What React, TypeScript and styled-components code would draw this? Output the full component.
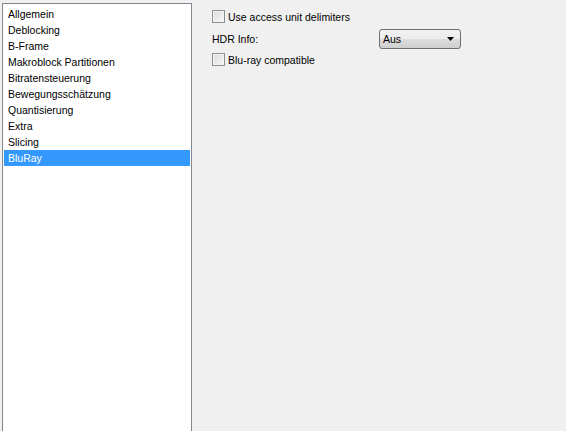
import React from "react";
import styled, { createGlobalStyle } from "styled-components";

const Global = createGlobalStyle`
  html, body { margin: 0; padding: 0; background: #f0f0f0; }
  body { font-family: Tahoma, "Liberation Sans", "DejaVu Sans", sans-serif; font-size: 10.5px; color: #000; }
`;

const Page = styled.div`
  width: 566px;
  height: 431px;
  overflow: hidden;
  display: flex;
  align-items: flex-start;
  padding: 3px 0 0 2px;
  box-sizing: border-box;
  gap: 20px;
`;

const ListBox = styled.div`
  width: 190px;
  height: 440px;
  box-sizing: border-box;
  background: #fff;
  border: 1px solid #828790;
  padding: 2px 1px;
  display: flex;
  flex-direction: column;
`;

const Item = styled.div<{ $selected?: boolean }>`
  height: 16px;
  line-height: 16px;
  padding-left: 4px;
  white-space: nowrap;
  background: ${(p) => (p.$selected ? "#3399ff" : "transparent")};
  color: ${(p) => (p.$selected ? "#fff" : "#000")};
`;

const Panel = styled.div`
  display: flex;
  flex-direction: column;
  padding-top: 7px;
  width: 249px;
`;

const CheckRow = styled.label`
  display: flex;
  align-items: center;
  height: 13px;
  gap: 3px;
`;

const Box = styled.span`
  width: 13px;
  height: 13px;
  box-sizing: border-box;
  border: 1px solid #8e8f8f;
  background: linear-gradient(135deg, #dcdcdc 0%, #f6f6f6 100%);
  box-shadow: inset 0 0 0 1px #f4f4f4;
`;

const FieldRow = styled.div`
  display: flex;
  align-items: center;
  justify-content: space-between;
  height: 20px;
  margin: 6px 0 4px;
`;

const Select = styled.div`
  width: 82px;
  height: 20px;
  box-sizing: border-box;
  border: 1px solid #707070;
  border-radius: 3px;
  background: linear-gradient(#f2f2f2 0%, #ebebeb 50%, #dddddd 51%, #cfcfcf 100%);
  display: flex;
  align-items: center;
  justify-content: space-between;
  padding: 0 6px 0 3px;
`;

const items = [
  "Allgemein",
  "Deblocking",
  "B-Frame",
  "Makroblock Partitionen",
  "Bitratensteuerung",
  "Bewegungsschätzung",
  "Quantisierung",
  "Extra",
  "Slicing",
  "BluRay",
];

export default function App() {
  return (
    <>
      <Global />
      <Page>
        <ListBox>
          {items.map((t) => (
            <Item key={t} $selected={t === "BluRay"}>
              {t}
            </Item>
          ))}
        </ListBox>
        <Panel>
          <CheckRow>
            <Box />
            Use access unit delimiters
          </CheckRow>
          <FieldRow>
            <span>HDR Info:</span>
            <Select>
              <span>Aus</span>
              <svg width="7" height="4" viewBox="0 0 7 4">
                <path d="M0 0h7L3.5 4z" fill="#000" />
              </svg>
            </Select>
          </FieldRow>
          <CheckRow>
            <Box />
            Blu-ray compatible
          </CheckRow>
        </Panel>
      </Page>
    </>
  );
}
